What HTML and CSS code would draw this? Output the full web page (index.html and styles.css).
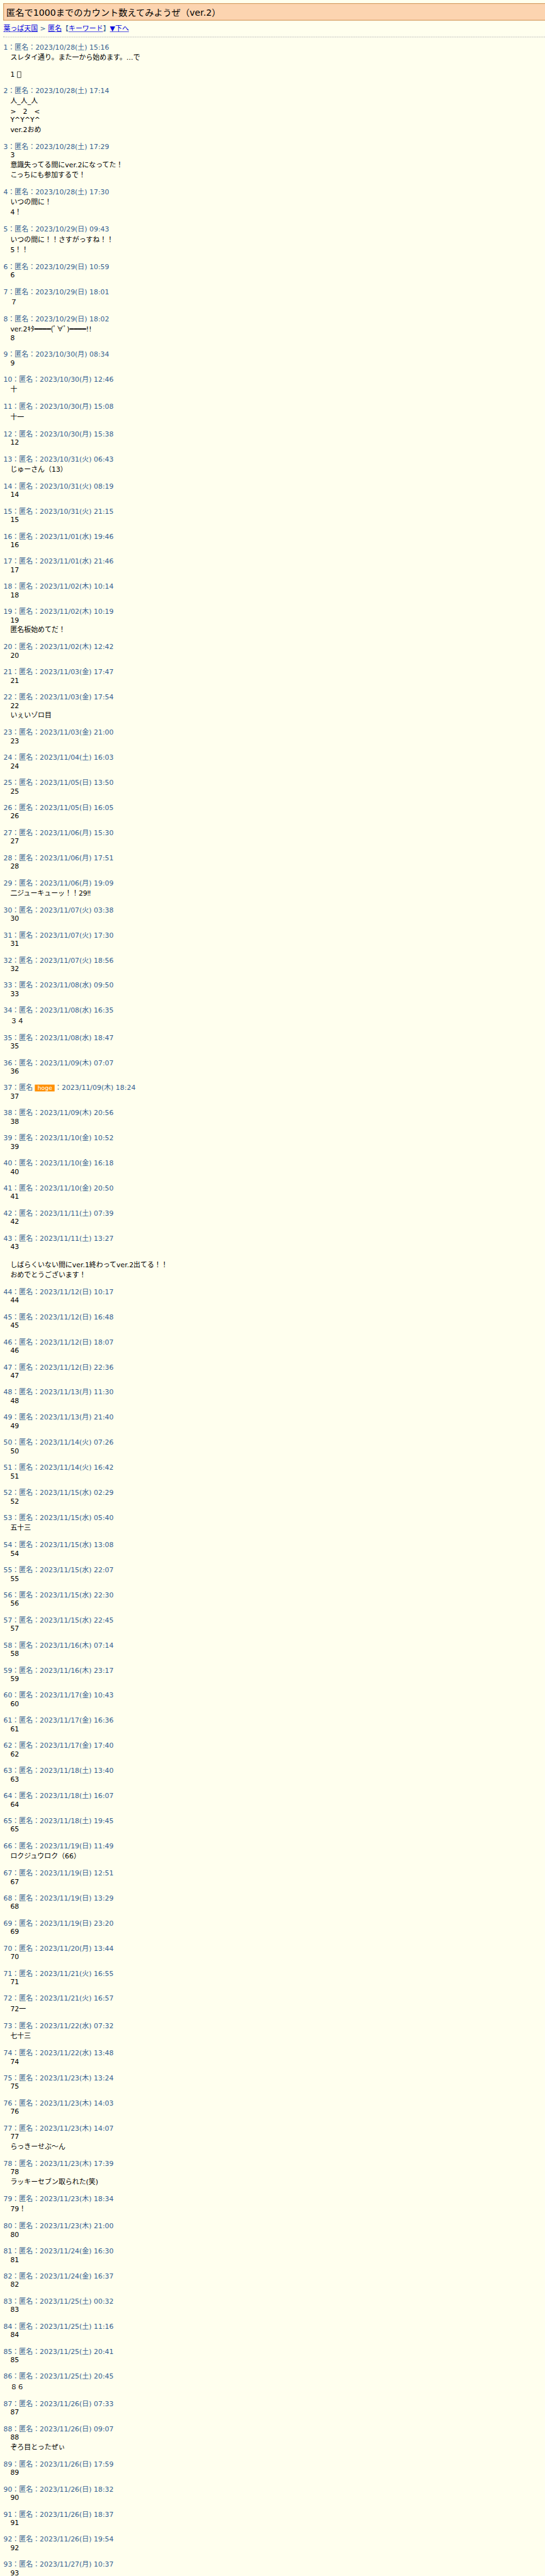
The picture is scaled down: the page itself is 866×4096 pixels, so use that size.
FILE: index.html
```html
<!DOCTYPE html>
<html lang="ja">
<head>
<meta charset="utf-8">
<title>匿名で1000までのカウント数えてみようぜ（ver.2）</title>
<link rel="stylesheet" href="styles.css">
</head>
<body>
<main class="page">
<h1 class="title">匿名で1000までのカウント数えてみようぜ（ver.2）</h1>
<nav class="nav"><a href="#">葉っぱ天国</a> &gt; <a href="#">匿名</a>【<a href="#">キーワード</a>】<a href="#">▼下へ</a></nav>
<hr class="rule">
<div class="posts" id="posts"></div>
</main>
<script src="posts.js"></script>
</body>
</html>
```
FILE: styles.css
```css
html {
  height: 4096px;
  overflow: hidden;
  background: #ffffee;
}
body {
  margin: 0;
  height: 4096px;
  overflow: hidden;
  background: #ffffee;
}
.page {
  box-sizing: border-box;
  width: 1268px;
  height: 6058px;
  overflow: hidden;
  padding: 8px 0 0 8px;
  transform: scale(0.68297, 0.67605);
  transform-origin: 0 0;
  font-family: "DejaVu Sans", "Noto Sans CJK JP", sans-serif;
  font-size: 16px;
  line-height: normal;
  color: #336090;
}
.title {
  margin: 0;
  padding: 0.2em 0.28em;
  border: 1px solid #b87020;
  border-right: 0;
  background: #fcd4b0;
  color: #000;
  font-size: 20.8px;
  font-weight: normal;
}
.nav {
  margin: 6px 0 8px;
}
.nav a {
  color: #0000dd;
}
.rule {
  margin: 8px 0 9.5px;
  border: 1px dotted #bbb;
  border-right: 0;
}
.post {
  margin: 0 0 16px;
}
.text {
  margin-left: 16px;
  color: #000;
  white-space: pre;
}
.tag {
  padding: 0 6px;
  background: #ff9000;
  color: #fff;
  font-size: 13.6px;
}
.tofu {
  display: inline-block;
  box-sizing: border-box;
  width: 9px;
  height: 14.5px;
  margin-left: 0.5px;
  border: 1px solid #000;
  vertical-align: -3px;
}
```
FILE: posts.js
```js
const stamps = `10/28(土) 15:16
10/28(土) 17:14
10/28(土) 17:29
10/28(土) 17:30
10/29(日) 09:43
10/29(日) 10:59
10/29(日) 18:01
10/29(日) 18:02
10/30(月) 08:34
10/30(月) 12:46
10/30(月) 15:08
10/30(月) 15:38
10/31(火) 06:43
10/31(火) 08:19
10/31(火) 21:15
11/01(水) 19:46
11/01(水) 21:46
11/02(木) 10:14
11/02(木) 10:19
11/02(木) 12:42
11/03(金) 17:47
11/03(金) 17:54
11/03(金) 21:00
11/04(土) 16:03
11/05(日) 13:50
11/05(日) 16:05
11/06(月) 15:30
11/06(月) 17:51
11/06(月) 19:09
11/07(火) 03:38
11/07(火) 17:30
11/07(火) 18:56
11/08(水) 09:50
11/08(水) 16:35
11/08(水) 18:47
11/09(木) 07:07
11/09(木) 18:24
11/09(木) 20:56
11/10(金) 10:52
11/10(金) 16:18
11/10(金) 20:50
11/11(土) 07:39
11/11(土) 13:27
11/12(日) 10:17
11/12(日) 16:48
11/12(日) 18:07
11/12(日) 22:36
11/13(月) 11:30
11/13(月) 21:40
11/14(火) 07:26
11/14(火) 16:42
11/15(水) 02:29
11/15(水) 05:40
11/15(水) 13:08
11/15(水) 22:07
11/15(水) 22:30
11/15(水) 22:45
11/16(木) 07:14
11/16(木) 23:17
11/17(金) 10:43
11/17(金) 16:36
11/17(金) 17:40
11/18(土) 13:40
11/18(土) 16:07
11/18(土) 19:45
11/19(日) 11:49
11/19(日) 12:51
11/19(日) 13:29
11/19(日) 23:20
11/20(月) 13:44
11/21(火) 16:55
11/21(火) 16:57
11/22(水) 07:32
11/22(水) 13:48
11/23(木) 13:24
11/23(木) 14:03
11/23(木) 14:07
11/23(木) 17:39
11/23(木) 18:34
11/23(木) 21:00
11/24(金) 16:30
11/24(金) 16:37
11/25(土) 00:32
11/25(土) 11:16
11/25(土) 20:41
11/25(土) 20:45
11/26(日) 07:33
11/26(日) 09:07
11/26(日) 17:59
11/26(日) 18:32
11/26(日) 18:37
11/26(日) 19:54
11/27(月) 10:37`.split("\n");

// Posts whose text is more than their own number; # stands for an unprintable character
const texts = {
  1: "スレタイ通り。また一から始めます。…で\n\n1 #",
  2: "人_人_人\n>　2　<\nY^Y^Y^\nver.2おめ",
  3: "3\n意識失ってる間にver.2になってた！\nこっちにも参加するで！",
  4: "いつの間に！\n4！",
  5: "いつの間に！！さすがっすね！！\n5！！",
  7: "７",
  8: "ver.2ｷﾀ━━━━(ﾟ∀ﾟ)━━━━!!\n8",
  10: "十",
  11: "十一",
  13: "じゅーさん（13）",
  19: "19\n匿名板始めてだ！",
  22: "22\nいぇいゾロ目",
  29: "二ジューキューッ！！29‼",
  34: "３４",
  43: "43\n\nしばらくいない間にver.1終わってver.2出てる！！\nおめでとうございます！",
  53: "五十三",
  66: "ロクジュウロク（66）",
  72: "72一",
  73: "七十三",
  77: "77\nらっきーせぶ〜ん",
  78: "78\nラッキーセブン取られた(笑)",
  79: "79！",
  86: "８６",
  88: "88\nぞろ目とったぜぃ"
};

document.getElementById("posts").innerHTML = stamps.map((stamp, i) => {
  const n = i + 1;
  const tag = n === 37 ? ' <span class="tag">hoge</span>' : "";
  const lines = (texts[n] || String(n)).split("\n")
    .map(line => line.replace(/</g, "&lt;").replace("#", '<span class="tofu"></span>')).join("<br>");
  return `<article class="post"><div class="head">${n}：匿名${tag}：2023/${stamp}</div><div class="text">${lines}</div></article>`;
}).join("");
```
